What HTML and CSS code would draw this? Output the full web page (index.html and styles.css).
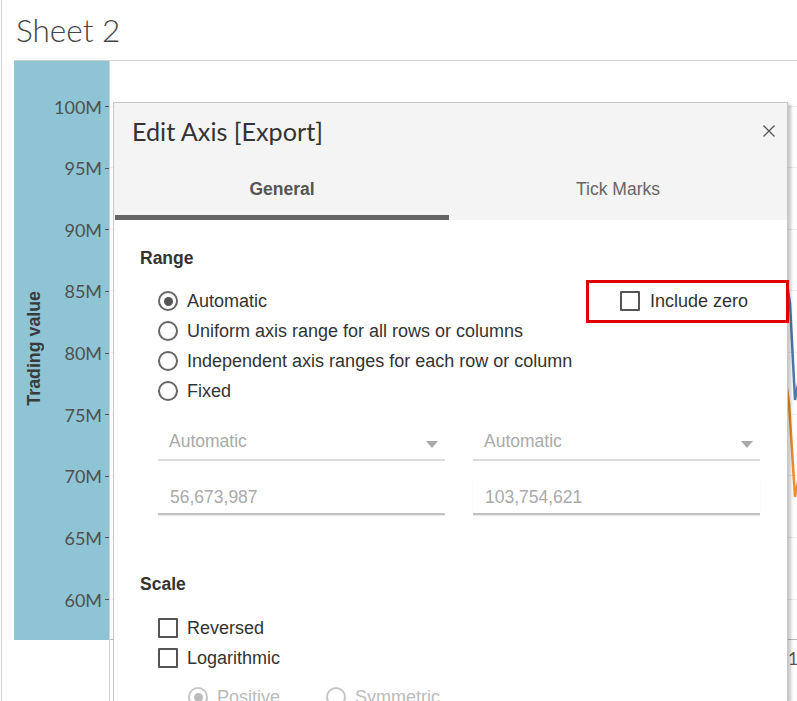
FILE: index.html
```html
<!DOCTYPE html>
<html lang="en">
<head>
<meta charset="utf-8">
<title>Sheet 2 - Edit Axis</title>
<link rel="stylesheet" href="styles.css">
</head>
<body>
<div class="page">
  <div class="sheet-title">Sheet 2</div>
  <div class="chart">
    <div class="axis-col">
      <div class="axis-panel">
        <div class="axis-title"><span>Trading value</span></div>
        <div class="ticks">
          <div class="tick"><span>100M</span><i></i></div>
          <div class="tick"><span>95M</span><i></i></div>
          <div class="tick"><span>90M</span><i></i></div>
          <div class="tick"><span>85M</span><i></i></div>
          <div class="tick"><span>80M</span><i></i></div>
          <div class="tick"><span>75M</span><i></i></div>
          <div class="tick"><span>70M</span><i></i></div>
          <div class="tick"><span>65M</span><i></i></div>
          <div class="tick"><span>60M</span><i></i></div>
        </div>
      </div>
    </div>
    <div class="plot-col">
      <div class="plot">
        <div class="grid">
          <div class="gline"></div><div class="gline"></div><div class="gline"></div>
          <div class="gline"></div><div class="gline"></div><div class="gline"></div>
          <div class="gline"></div><div class="gline"></div><div class="gline"></div>
        </div>
        <svg class="marks" width="687" height="579" viewBox="0 0 687 579">
          <polyline points="660,120 680,242 685,339 700,260" fill="none" stroke="#4e79a7" stroke-width="2.5"/>
          <polyline points="670,280 679,342 685,436 700,360" fill="none" stroke="#f28e2b" stroke-width="2.5"/>
        </svg>
      </div>
      <div class="xaxis"><span>1</span></div>
    </div>
  </div>
</div>

<div class="dialog">
  <div class="dlg-head">
    <div class="dlg-titlebar">
      <span class="dlg-title">Edit Axis [Export]</span>
      <svg class="close" width="12" height="12" viewBox="0 0 12 12"><path d="M0.5 0.5 L11.5 11.5 M11.5 0.5 L0.5 11.5" stroke="#555" stroke-width="1.3" fill="none"/></svg>
    </div>
    <div class="tabs">
      <div class="tab active">General</div>
      <div class="tab">Tick Marks</div>
    </div>
  </div>
  <div class="dlg-body">
    <div class="section-label">Range</div>
    <div class="options">
      <div class="opt">
        <span class="radio on"></span><span>Automatic</span>
        <div class="include-zero"><span class="check"></span><span>Include zero</span></div>
      </div>
      <div class="opt"><span class="radio"></span><span>Uniform axis range for all rows or columns</span></div>
      <div class="opt"><span class="radio"></span><span>Independent axis ranges for each row or column</span></div>
      <div class="opt"><span class="radio"></span><span>Fixed</span></div>
    </div>
    <div class="fields">
      <div class="dropdown"><span>Automatic</span><span class="arrow"></span></div>
      <div class="dropdown"><span>Automatic</span><span class="arrow"></span></div>
      <div class="textfield">56,673,987</div>
      <div class="textfield">103,754,621</div>
    </div>
    <div class="section-label scale">Scale</div>
    <div class="options checks">
      <div class="opt"><span class="check"></span><span>Reversed</span></div>
      <div class="opt"><span class="check"></span><span>Logarithmic</span></div>
    </div>
    <div class="subopts">
      <div class="opt disabled"><span class="radio on"></span><span>Positive</span></div>
      <div class="opt disabled"><span class="radio"></span><span>Symmetric</span></div>
    </div>
  </div>
</div>
</body>
</html>
```

FILE: styles.css
```css
html, body {
  margin: 0;
  padding: 0;
  width: 797px;
  height: 701px;
  overflow: hidden;
  background: #fff;
}
body {
  position: relative;
  font-family: "Liberation Sans", Arial, sans-serif;
  color: #333;
}
.page {
  margin-left: 1px;
  border-left: 1px solid #d6d6d6;
  height: 701px;
}
.sheet-title {
  height: 60px;
  box-sizing: border-box;
  padding: 12px 0 0 14px;
  font-family: Lato, "Open Sans", sans-serif;
  font-weight: 300;
  font-size: 31.5px;
  line-height: 37px;
  color: #444;
}
.chart {
  margin-left: 12px;
  display: flex;
  border-top: 1px solid #d0d0d0;
  height: 640px;
}
.axis-col {
  width: 95px;
  flex: none;
}
.axis-panel {
  height: 579px;
  background: #8ec4d4;
  display: grid;
  grid-template-columns: 40px 1fr;
}
.axis-title {
  display: flex;
  align-items: center;
  justify-content: center;
  padding-bottom: 5px;
}
.axis-title span {
  writing-mode: vertical-rl;
  transform: rotate(180deg);
  font-family: "Liberation Sans", Arial, sans-serif;
  font-weight: bold;
  font-size: 17.8px;
  color: #3a3a3a;
}
.ticks {
  padding-top: 14.7px;
}
.tick {
  height: 61.625px;
  display: flex;
  align-items: center;
  justify-content: flex-end;
  padding-right: 1px;
  font-family: Lato, sans-serif;
  font-size: 18px;
  color: #505050;
}
.tick i {
  display: block;
  width: 5px;
  height: 1px;
  background: #555;
  margin-left: 3px;
}
.plot-col {
  flex: 1;
  border-left: 1px solid #d4d4d4;
}
.plot {
  position: relative;
  height: 579px;
  box-sizing: border-box;
  border-bottom: 1px solid #b8b8b8;
  overflow: hidden;
}
.grid {
  padding-top: 44.5px;
}
.gline {
  height: 61.625px;
  box-sizing: border-box;
  border-top: 1px solid #ececec;
}
.marks {
  position: absolute;
  left: 0;
  top: 0;
}
.xaxis {
  padding: 8px 0 0 678px;
  font-family: Lato, sans-serif;
  font-size: 17.5px;
  color: #555;
}

/* Dialog */
.dialog {
  position: absolute;
  left: 113px;
  top: 102px;
  width: 675px;
  height: 599px;
  overflow: visible;
  box-sizing: border-box;
  border: 1px solid #c8c8c8;
  border-bottom: none;
  background: #fff;
  box-shadow: 3px 2px 3px rgba(0, 0, 0, 0.22);
}
.dlg-head {
  background: #f4f4f4;
}
.dlg-titlebar {
  height: 56px;
  display: flex;
  align-items: center;
  justify-content: space-between;
  padding: 0 12px 0 18px;
}
.dlg-title {
  font-family: Lato, "Open Sans", sans-serif;
  font-size: 25.2px;
  color: #333;
}
.tabs {
  display: flex;
  height: 61px;
  padding-left: 1px;
}
.tab {
  flex: 1;
  display: flex;
  align-items: center;
  justify-content: center;
  box-sizing: border-box;
  padding-top: 4px;
  border-bottom: 5px solid transparent;
  font-size: 17.5px;
  color: #666;
}
.tab.active {
  flex: none;
  width: 334px;
  font-weight: bold;
  color: #555;
  border-bottom-color: #666;
}
.dlg-body {
  padding: 28px 0 0 26px;
}
.section-label {
  font-weight: bold;
  font-size: 17.5px;
  line-height: 20px;
  color: #333;
}
.section-label.scale {
  margin-top: 59px;
}
.options {
  margin: 18px 0 0 18px;
}
.options.checks {
  margin-top: 19px;
}
.opt {
  display: flex;
  align-items: center;
  height: 30px;
  gap: 9px;
  font-size: 18px;
  color: #333;
}
.radio {
  width: 20px;
  height: 20px;
  box-sizing: border-box;
  border: 2px solid #666;
  border-radius: 50%;
  display: flex;
  align-items: center;
  justify-content: center;
  flex: none;
}
.radio.on::after {
  content: "";
  width: 9px;
  height: 9px;
  border-radius: 50%;
  background: #555;
}
.check {
  width: 20px;
  height: 20px;
  box-sizing: border-box;
  border: 2px solid #555;
  border-radius: 1px;
  flex: none;
}
.include-zero {
  margin-left: auto;
  margin-right: -2px;
  width: 203px;
  height: 43px;
  box-sizing: border-box;
  border: 3px solid #e00000;
  display: flex;
  align-items: center;
  gap: 10px;
  padding-left: 31px;
  flex: none;
}
.fields {
  margin: 18px 0 0 18px;
  display: grid;
  grid-template-columns: 287px 287px;
  column-gap: 28px;
  row-gap: 17px;
}
.dropdown {
  height: 37px;
  box-sizing: border-box;
  border-bottom: 2px solid #dcdcdc;
  display: flex;
  align-items: center;
  justify-content: space-between;
  padding: 0 7px 0 11px;
  font-size: 17.5px;
  color: #aaa;
}
.arrow {
  width: 0;
  height: 0;
  border-left: 6px solid transparent;
  border-right: 6px solid transparent;
  border-top: 7px solid #aaa;
  margin-top: 5px;
}
.textfield {
  height: 37px;
  box-sizing: border-box;
  border-bottom: 2px solid #c2c2c2;
  box-shadow: 0 1px 1px rgba(0, 0, 0, 0.08);
  display: flex;
  align-items: center;
  padding: 3px 0 0 12px;
  font-size: 17.5px;
  color: #aaa;
}
.subopts {
  margin: 9px 0 0 48px;
  display: flex;
  gap: 46px;
}
.opt.disabled {
  color: #bbb;
}
.opt.disabled .radio {
  border-color: #c6c6c6;
}
.opt.disabled .radio.on::after {
  background: #bbb;
}
```
